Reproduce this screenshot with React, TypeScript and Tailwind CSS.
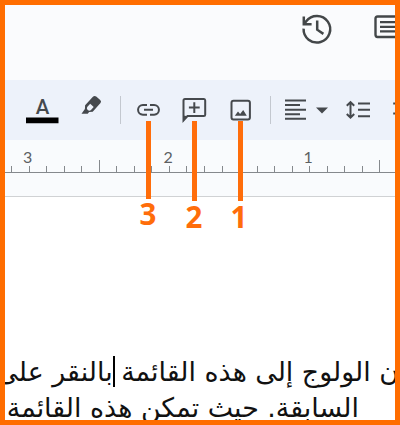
import React from 'react';

const Ticks = () => (
  <div className="flex h-[12px] items-end pl-[6px]">
    {Array.from({ length: 22 }, (_, i) => (
      <div
        key={i}
        className={`w-[17.56px] shrink-0 border-l border-[#85898d] ${i % 8 === 5 ? 'h-[12px]' : 'h-[6px]'}`}
      />
    ))}
  </div>
);

const Callout = ({ n, className, label }: { n: string; className: string; label: string }) => (
  <div className={`absolute flex w-[20px] flex-col items-center text-[#ff6d0a] ${className}`}>
    <div className="w-[5px] grow bg-[#ff6d0a]" />
    <span className={`font-['Open_Sans',sans-serif] text-[29.5px] font-bold leading-[30px] ${label}`}>{n}</span>
  </div>
);

export default function App() {
  return (
    <div className="relative flex h-[425px] w-[400px] flex-col overflow-hidden border-[5px] border-[#ff6d00] bg-white font-[Roboto,sans-serif]">
      <header className="relative h-[75px] shrink-0 bg-[#fafbfd]">
        <svg className="absolute left-[292px] top-[4px]" width="40" height="40" viewBox="0 0 40 40" fill="none" stroke="#434749" strokeWidth="2.5">
          <path d="M6.6 19.6A13.3 13.3 0 1 0 9.2 12.3L7.2 15" />
          <path d="M6.8 7.6V15.2H14.6" />
          <path d="M20.2 11.5v9.2l6.2 4.2" strokeWidth="2.5" />
        </svg>
        <svg className="absolute left-[368px] top-[8px]" width="22" height="28" viewBox="0 0 22 28" fill="none" stroke="#434749">
          <path d="M24 3.5H4.5Q2.5 3.5 2.5 5.5V21.5Q2.5 24 4.5 24H24" strokeWidth="2.4" />
          <path d="M7 9.2h17M7 13.8h17M7 18.3h17" strokeWidth="2.2" />
        </svg>
      </header>
      <div className="flex h-[60px] shrink-0 items-center bg-[#edf2fa]">
        <svg width="390" height="60" viewBox="5 80 390 60" fill="none" stroke="#45494d">
          <text x="42.5" y="113.5" textAnchor="middle" fontSize="20.5" fontWeight="500" fill="#45494d" stroke="none">A</text>
          <path d="M26 117.5h32.5v5.8H26z" fill="#000" stroke="none" />
          <path d="M81.5 113.7l3.4-4.6 0.2-3.9 7.6-8.3q1.7-1.7 3.5-.4l4 3.4q1.6 1.6.3 3.2l-7.8 8.6-3.6.4-1.4 1.6z" fill="#45494d" stroke="none" />
          <path d="M87.2 107l3-3.2 3.5 3.1-3 3.3q-1.4 1-3-.3-1.4-1.5-.5-2.9z" fill="#edf2fa" stroke="none" />
          <path d="M120.5 96v28M270.5 96v28" stroke="#c3c8cf" strokeWidth="1" />
          <path d="M147 105h-4.1a4.85 4.85 0 0 0 0 9.7H147M150 105h4.1a4.85 4.85 0 0 1 0 9.7H150M144 109.8h9" strokeWidth="2" />
          <path d="M183.5 120.5V100.5q0-1.5 1.5-1.5h19q1.2 0 1.2 1.5v14.2q0 1.4-1.4 1.4H187.5z" strokeWidth="2" />
          <path d="M183 121.5v-6l5 .8z" fill="#45494d" stroke="none" />
          <path d="M194.3 102.2v10.8M188.9 107.6h10.8" strokeWidth="2" />
          <rect x="231.5" y="100.7" width="18.4" height="18.8" rx="2" strokeWidth="2" />
          <path d="M234.8 115.7l3.2-4.2 2.1 2.6 3.1-4.1 3.6 5.7z" fill="#45494d" stroke="none" />
          <path d="M285 100.5h21M285 105h15M285 109.7h21M285 114.3h15M285 118.8h21" strokeWidth="2" />
          <path d="M316 107.5h12l-6 6z" fill="#45494d" stroke="none" />
          <path d="M350.5 103v13.5M346.8 105.8l3.7-3.7 3.7 3.7M346.8 114l3.7 3.7 3.7-3.7M358 103.5h12M358 109.8h12M358 116.2h12" strokeWidth="2" />
          <path d="M393.2 103.5h2M393.2 113.5h2" strokeWidth="2" />
        </svg>
      </div>
      <div className="h-[57px] shrink-0 border-b border-[#d0d2d4] bg-[#f9fbfd]">
        <div className="flex h-[20px] pl-[14px] pt-[8px] font-[Lato,sans-serif] text-[16px] leading-[18px] text-[#5c6063]">
          <span className="w-[140.5px] pl-[4px]">3</span>
          <span className="w-[140px] pl-[4px]">2</span>
          <span className="pl-[4px]">1</span>
        </div>
        <div className="h-[13px] border-b border-[#85898d]">
          <Ticks />
        </div>
      </div>
      <main dir="rtl" className="grow overflow-hidden whitespace-nowrap bg-white pt-[157px] font-['DejaVu_Sans',sans-serif] text-[26.85px] leading-[36px] text-[#111]">
        <p className="-mr-[4px]">ن الولوج إلى هذه القائمة بالنقر على</p>
        <p className="pr-[36px]">السابقة. حيث تمكن هذه القائمة</p>
      </main>
      <div className="absolute left-[107.5px] top-[351px] h-[31px] w-[2px] bg-black" />
      <Callout n="3" className="left-[133px] top-[116px] h-[108px]" label="" />
      <Callout n="2" className="left-[179px] top-[116px] h-[110px]" label="relative top-px" />
      <Callout n="1" className="left-[225px] top-[116px] h-[110px]" label="relative right-px top-px" />
    </div>
  );
}
